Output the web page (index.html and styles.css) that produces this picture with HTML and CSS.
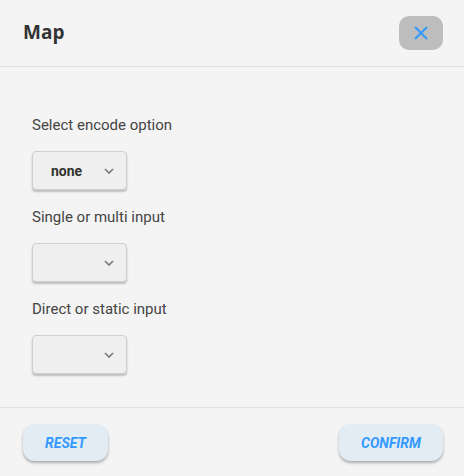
FILE: index.html
```html
<!DOCTYPE html>
<html>
<head>
<meta charset="utf-8">
<link rel="stylesheet" href="styles.css">
</head>
<body>
<div class="dialog">
  <header class="head">
    <h1 class="title">Map</h1>
    <button class="close" aria-label="Close">
      <svg width="16" height="16" viewBox="0 0 16 16"><path d="M2 2L14 14M14 2L2 14" stroke="#3399ff" stroke-width="2" fill="none"/></svg>
    </button>
  </header>
  <main class="body">
    <div class="field">
      <label class="label">Select encode option</label>
      <div class="select"><span class="val">none</span><svg class="chev" width="10" height="6" viewBox="0 0 10 6"><path d="M1 1L5 5L9 1" stroke="#777" stroke-width="1.6" fill="none"/></svg></div>
    </div>
    <div class="field">
      <label class="label">Single or multi input</label>
      <div class="select"><span class="val"></span><svg class="chev" width="10" height="6" viewBox="0 0 10 6"><path d="M1 1L5 5L9 1" stroke="#777" stroke-width="1.6" fill="none"/></svg></div>
    </div>
    <div class="field">
      <label class="label">Direct or static input</label>
      <div class="select"><span class="val"></span><svg class="chev" width="10" height="6" viewBox="0 0 10 6"><path d="M1 1L5 5L9 1" stroke="#777" stroke-width="1.6" fill="none"/></svg></div>
    </div>
  </main>
  <footer class="foot">
    <button class="btn reset">RESET</button>
    <button class="btn confirm">CONFIRM</button>
  </footer>
</div>
</body>
</html>
```

FILE: styles.css
```css
html, body {
  margin: 0;
  padding: 0;
  background: #f4f4f4;
}
.dialog {
  width: 464px;
  height: 476px;
  background: #f4f4f4;
  font-family: Roboto, "Liberation Sans", sans-serif;
  display: flex;
  flex-direction: column;
}
.head {
  height: 67px;
  box-sizing: border-box;
  border-bottom: 1px solid #e0e0e0;
  display: flex;
  align-items: center;
  justify-content: space-between;
  padding: 0 21px 0 23px;
}
.title {
  margin: 0;
  font-family: "Open Sans", sans-serif;
  font-weight: 700;
  font-size: 19px;
  color: #333;
  position: relative;
  top: -1px;
}
.close {
  width: 44px;
  height: 34px;
  border: none;
  border-radius: 10px;
  background: #bdbdbd;
  display: flex;
  align-items: center;
  justify-content: center;
  padding: 0;
}
.body {
  height: 341px;
  box-sizing: border-box;
  border-bottom: 1px solid #e0e0e0;
  padding: 49px 32px 0 32px;
  display: flex;
  flex-direction: column;
  gap: 18px;
}
.field {
  display: flex;
  flex-direction: column;
  gap: 17px;
}
.label {
  font-size: 15px;
  color: #444;
  line-height: 18px;
}
.select {
  width: 95px;
  height: 39px;
  box-sizing: border-box;
  border: 1px solid #cfcfcf;
  border-radius: 4px;
  background: #efefef;
  box-shadow: 0 2px 2px rgba(0,0,0,0.22);
  display: flex;
  align-items: center;
  padding: 0 12px 0 18px;
}
.val {
  flex: 1;
  font-weight: 700;
  font-size: 14px;
  color: #333;
}
.foot {
  flex: 1;
  display: flex;
  align-items: flex-start;
  justify-content: space-between;
  padding: 16px 21px 0 23px;
}
.btn {
  height: 37px;
  border: none;
  border-radius: 12px;
  background: #e1ecf5;
  box-shadow: 0 2px 3px rgba(0,0,0,0.3);
  font-family: Roboto, sans-serif;
  font-weight: 700;
  font-style: italic;
  font-size: 14px;
  color: #3399ff;
  padding: 0;
}
.reset { width: 85px; }
.confirm { width: 104px; }
```
